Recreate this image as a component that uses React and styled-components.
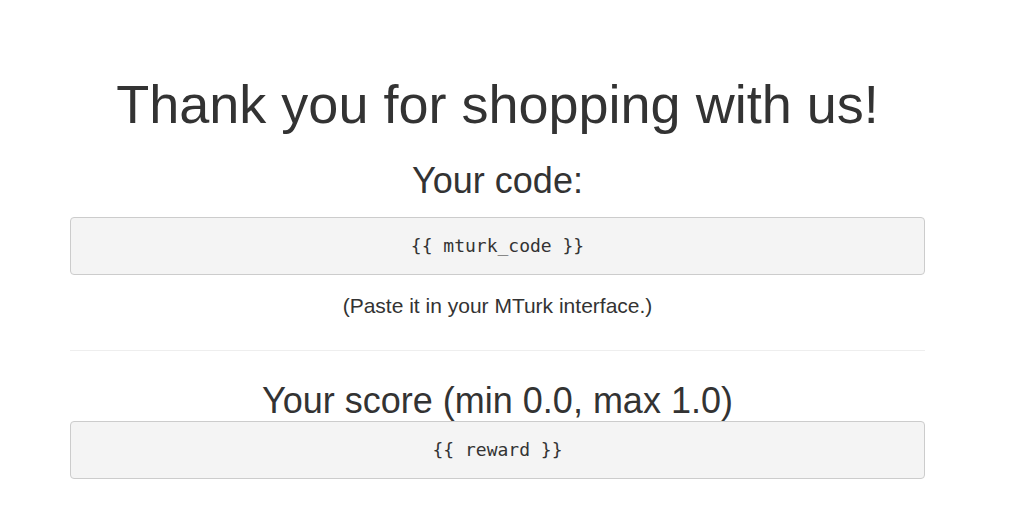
import React from "react";
import styled, { createGlobalStyle } from "styled-components";

const GlobalStyle = createGlobalStyle`
  body {
    margin: 0;
    background: #fff;
    color: #333;
    font-family: "Liberation Sans", Arial, sans-serif;
  }
`;

const Page = styled.div`
  width: 855px;
  margin-left: 70px;
  padding-top: 75px;
  text-align: center;
`;

const Title = styled.h1`
  margin: 0 0 27px;
  font-size: 54px;
  font-weight: 400;
  line-height: 1.1;
`;

const Heading = styled.h2`
  margin: ${(p) => p.$top || 0}px 0 ${(p) => p.$bottom || 0}px;
  font-size: 36px;
  font-weight: 400;
  line-height: 1.1;
`;

const CodeBox = styled.pre`
  margin: 0;
  padding: 15px;
  background: #f4f4f4;
  border: 1px solid #ccc;
  border-radius: 4px;
  font-family: "DejaVu Sans Mono", "Liberation Mono", monospace;
  font-size: 18px;
  line-height: 26px;
  color: #333;
  text-align: center;
`;

const Note = styled.p`
  margin: 18px 0 31px;
  font-size: 21px;
  line-height: 26px;
`;

const Divider = styled.hr`
  margin: 0;
  border: 0;
  border-top: 1px solid #eee;
`;

const App = () => {
  return (
    <>
      <GlobalStyle />
      <Page>
        <Title>Thank you for shopping with us!</Title>
        <Heading $bottom={16}>Your code:</Heading>
        <CodeBox>{"{{ mturk_code }}"}</CodeBox>
        <Note>(Paste it in your MTurk interface.)</Note>
        <Divider />
        <Heading $top={30}>Your score (min 0.0, max 1.0)</Heading>
        <CodeBox>{"{{ reward }}"}</CodeBox>
      </Page>
    </>
  );
};

export default App;
